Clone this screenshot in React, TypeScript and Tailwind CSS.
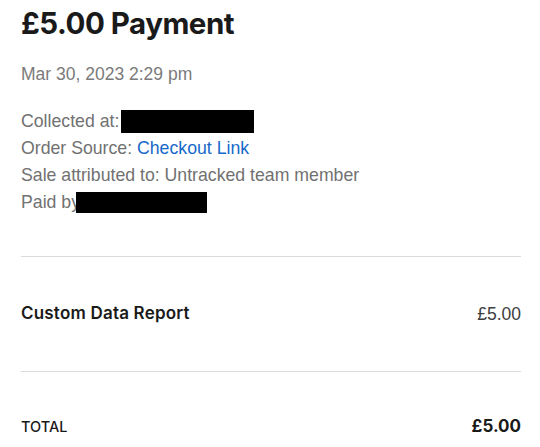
import React from "react";

const arial = { fontFamily: "'Liberation Sans', Arial, sans-serif" };

export default function App() {
  return (
    <div className="bg-white w-[540px] h-[447px] overflow-hidden pl-[21px] pr-[19px] pt-[5px] text-[#1a1a1a]" style={{ fontFamily: "Inter, 'Liberation Sans', sans-serif" }}>
      <h1 className="text-[29.5px] leading-[36px] font-bold tracking-[-0.5px]">£5.00 Payment</h1>
      <div className="mt-[23px] text-[17.5px] leading-[20px] text-[#7a7a7a]" style={arial}>Mar 30, 2023 2:29 pm</div>
      <div className="mt-[24px] text-[17.7px] leading-[27px] text-[#717171]" style={arial}>
        <div className="flex items-center">Collected at:<span className="inline-block w-[133px] h-[23px] bg-black ml-[2px]" /></div>
        <div>Order Source: <span className="text-[#1769c9]">Checkout Link</span></div>
        <div>Sale attributed to: Untracked team member</div>
        <div className="flex items-center">Paid by<span className="inline-block w-[131px] h-[21px] bg-black -ml-[4px]" /></div>
      </div>
      <div className="mt-[40px] border-t border-[#dcdcdc]" />
      <div className="h-[114px] flex items-center justify-between">
        <span className="text-[17px] font-semibold tracking-[0.2px]">Custom Data Report</span>
        <span className="text-[17.5px] text-[#3d3d3d]" style={arial}>£5.00</span>
      </div>
      <div className="border-t border-[#dcdcdc]" />
      <div className="mt-[42px] flex items-center justify-between">
        <span className="text-[14.5px] font-medium">TOTAL</span>
        <span className="text-[17px] font-bold">£5.00</span>
      </div>
    </div>
  );
}
